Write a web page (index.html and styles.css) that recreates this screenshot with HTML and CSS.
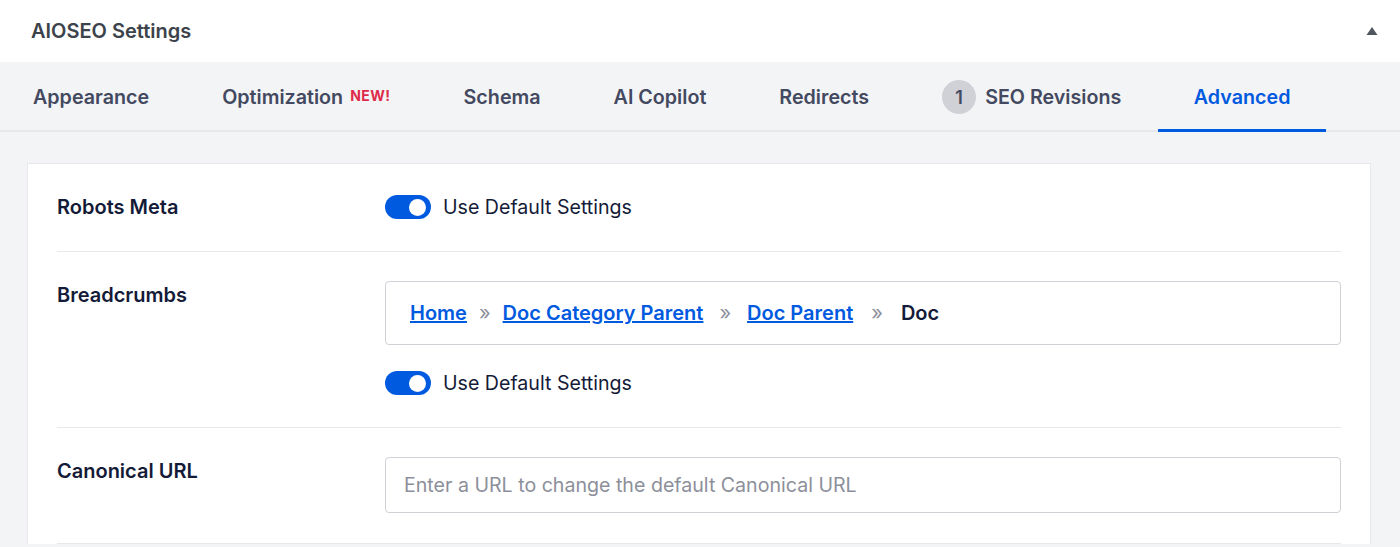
FILE: index.html
```html
<!DOCTYPE html>
<html lang="en">
<head>
    <meta charset="UTF-8">
    <meta name="viewport" content="width=device-width, initial-scale=1.0">
    <title>AIOSEO Settings</title>
    <link rel="stylesheet" href="styles.css">
</head>
<body>
    <div class="postbox">
        <div class="postbox-header">
            <h2 class="postbox-title">AIOSEO Settings</h2>
            <button class="toggle-indicator" aria-label="Collapse">
                <svg width="12" height="10" viewBox="0 0 12 10"><path d="M6 1 L11.5 9 L0.5 9 Z" fill="#50575e"/></svg>
            </button>
        </div>

        <nav class="tabs">
            <a class="tab">Appearance</a>
            <a class="tab">Optimization <sup class="new">NEW!</sup></a>
            <a class="tab">Schema</a>
            <a class="tab">AI Copilot</a>
            <a class="tab">Redirects</a>
            <a class="tab"><span class="count">1</span> SEO Revisions</a>
            <a class="tab active">Advanced</a>
        </nav>

        <div class="tab-body">
            <div class="card">
                <div class="row">
                    <div class="row-label">Robots Meta</div>
                    <div class="row-content">
                        <label class="switch-row">
                            <span class="switch on"><span class="knob"></span></span>
                            Use Default Settings
                        </label>
                    </div>
                </div>

                <div class="row">
                    <div class="row-label">Breadcrumbs</div>
                    <div class="row-content">
                        <div class="crumbs">
                            <a href="#">Home</a>
                            <span class="sep">»</span>
                            <a href="#">Doc Category Parent</a>
                            <span class="sep sep-wide">»</span>
                            <a href="#">Doc Parent</a>
                            <span class="sep sep-wider">»</span>
                            <span class="current">Doc</span>
                        </div>
                        <label class="switch-row">
                            <span class="switch on"><span class="knob"></span></span>
                            Use Default Settings
                        </label>
                    </div>
                </div>

                <div class="row">
                    <div class="row-label">Canonical URL</div>
                    <div class="row-content">
                        <input type="text" class="text-input" placeholder="Enter a URL to change the default Canonical URL">
                    </div>
                </div>
            </div>
        </div>
    </div>
</body>
</html>
```

FILE: styles.css
```css
/* Base */
body {
    margin: 0;
    font-family: 'Inter', 'Noto Sans', sans-serif;
    background: #f3f4f5;
    color: #141b38;
}

.postbox {
    background: #f3f4f5;
}

/* Header */
.postbox-header {
    display: flex;
    justify-content: space-between;
    align-items: center;
    height: 62px;
    padding: 0 22px 0 31px;
    background: #fff;
}

.postbox-title {
    margin: 0;
    font-size: 20px;
    font-weight: 600;
    color: #3c434a;
}

.toggle-indicator {
    border: none;
    background: none;
    padding: 0;
    cursor: pointer;
    display: flex;
}

/* Tabs */
.tabs {
    display: flex;
    height: 68px;
    border-bottom: 2px solid #e8e8eb;
}

.tab {
    display: flex;
    align-items: center;
    padding: 3px 36.5px 0;
    margin-bottom: -2px;
    font-size: 19.7px;
    font-weight: 600;
    color: #434960;
    border-bottom: 3px solid transparent;
    cursor: pointer;
}

.tab:first-child {
    padding-left: 33px;
}

.tab.active {
    padding: 3px 36px 0;
    color: #005ae0;
    border-bottom-color: #005ae0;
}

.new {
    font-size: 14px;
    font-weight: 700;
    letter-spacing: 0.5px;
    color: #df2a4a;
    margin-left: 7px;
    align-self: flex-start;
    margin-top: 22px;
}

.count {
    display: inline-flex;
    align-items: center;
    justify-content: center;
    width: 34px;
    height: 34px;
    border-radius: 50%;
    background: #d0d1d7;
    color: #434960;
    font-size: 18px;
    margin-right: 9px;
}

/* Card */
.tab-body {
    padding: 31px 29px 0 27px;
}

.card {
    background: #fff;
    border: 1px solid #e8e8eb;
    border-bottom: none;
    padding: 0 29px;
}

.row {
    display: flex;
    padding: 29px 0 30px;
    border-bottom: 1px solid #e8e8eb;
}

.row-label {
    width: 328px;
    flex-shrink: 0;
    font-size: 20px;
    font-weight: 600;
    padding-top: 2px;
}

.row-content {
    flex: 1;
    display: flex;
    flex-direction: column;
    gap: 24px;
}

/* Switch */
.switch-row {
    display: flex;
    align-items: center;
    gap: 12px;
    font-size: 19.6px;
    color: #141b38;
    height: 28px;
}

.switch {
    width: 46px;
    height: 24px;
    border-radius: 12px;
    background: #d0d1d7;
    display: flex;
    align-items: center;
    padding: 0 5px;
    box-sizing: border-box;
}

.switch.on {
    background: #005ae0;
    justify-content: flex-end;
}

.knob {
    width: 17px;
    height: 17px;
    border-radius: 50%;
    background: #fff;
}

/* Breadcrumb preview */
.crumbs {
    display: flex;
    align-items: center;
    height: 62px;
    padding: 0 24px;
    border: 1px solid #d0d1d7;
    border-radius: 4px;
    font-size: 20px;
    font-weight: 600;
}

.crumbs a {
    color: #005ae0;
    text-decoration: underline;
}

.sep {
    color: #8c8f9a;
    font-weight: 400;
    margin: 0 12px;
}

.sep-wide {
    margin: 0 16px;
}

.sep-wider {
    margin: 0 18px;
}

.current {
    color: #141b38;
}

/* Text input */
.text-input {
    height: 56px;
    border: 1px solid #d0d1d7;
    border-radius: 4px;
    padding: 0 18px;
    font-family: inherit;
    font-size: 19.6px;
    color: #141b38;
    box-sizing: border-box;
    width: 100%;
}

.text-input::placeholder {
    color: #8c8f9a;
}
```
